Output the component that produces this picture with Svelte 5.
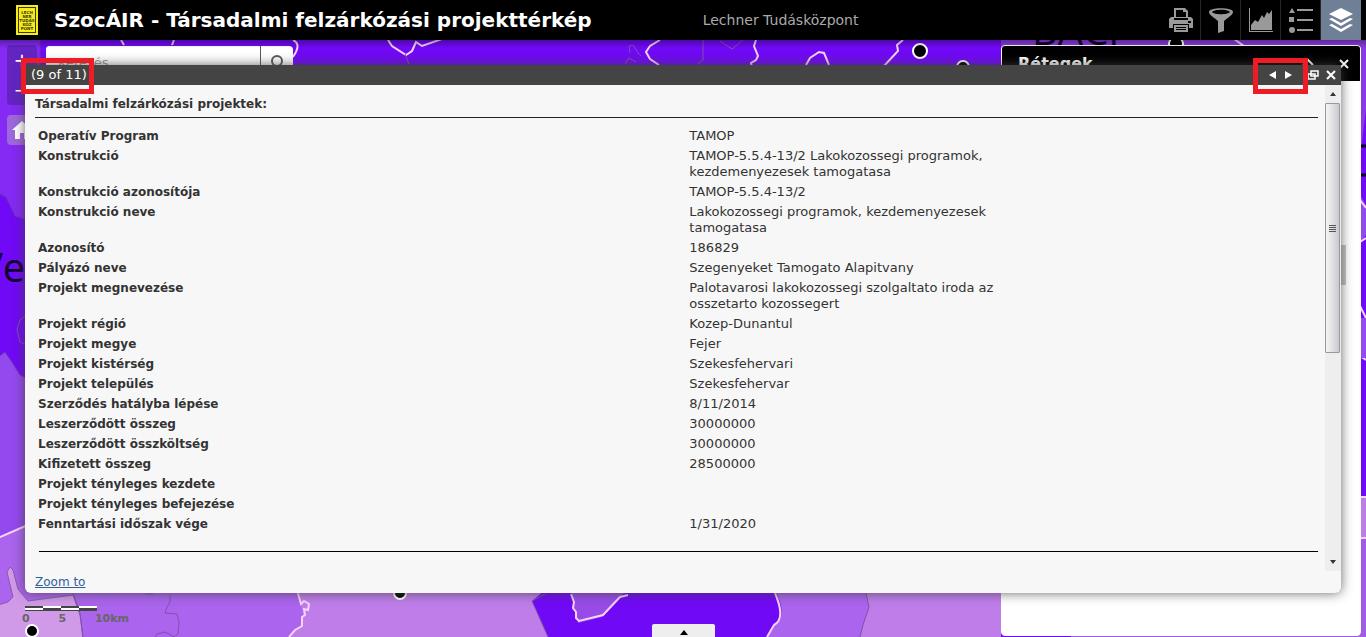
<script>
	const tools = [
		{ id: 'print', label: 'Nyomtatás' },
		{ id: 'filter', label: 'Szűrő' },
		{ id: 'chart', label: 'Diagram' },
		{ id: 'legend', label: 'Jelmagyarázat' },
		{ id: 'layers', label: 'Rétegek' },
	];

	let active = $state('layers');

	const fields = [
		['Operatív Program', 'TAMOP'],
		['Konstrukció', 'TAMOP-5.5.4-13/2 Lakokozossegi programok, kezdemenyezesek tamogatasa'],
		['Konstrukció azonosítója', 'TAMOP-5.5.4-13/2'],
		['Konstrukció neve', 'Lakokozossegi programok, kezdemenyezesek tamogatasa'],
		['Azonosító', '186829'],
		['Pályázó neve', 'Szegenyeket Tamogato Alapitvany'],
		['Projekt megnevezése', 'Palotavarosi lakokozossegi szolgaltato iroda az osszetarto kozossegert'],
		['Projekt régió', 'Kozep-Dunantul'],
		['Projekt megye', 'Fejer'],
		['Projekt kistérség', 'Szekesfehervari'],
		['Projekt település', 'Szekesfehervar'],
		['Szerződés hatályba lépése', '8/11/2014'],
		['Leszerződött összeg', '30000000'],
		['Leszerződött összköltség', '30000000'],
		['Kifizetett összeg', '28500000'],
		['Projekt tényleges kezdete', ''],
		['Projekt tényleges befejezése', ''],
		['Fenntartási időszak vége', '1/31/2020'],
	];

	const logoRows = ['LECH', 'NER', 'TUDÁS', 'KÖZ', 'PONT'];
</script>

<div class="page">
	<header class="topbar">
		<svg class="logo" viewBox="0 0 22 30" aria-hidden="true">
			<rect width="22" height="30" fill="#f4ea1c" />
			<rect x="2.5" y="2.5" width="17" height="25" fill="none" stroke="#3c3a08" />
			{#each logoRows as row, i}
				<text x="11" y={9 + i * 4} text-anchor="middle">{row}</text>
			{/each}
		</svg>
		<h1>SzocÁIR - Társadalmi felzárkózási projekttérkép</h1>
		<span class="subtitle">Lechner Tudásközpont</span>
		<nav class="tools">
			{#each tools as tool}
				<button class="tool" class:active={active === tool.id} aria-label={tool.label} onclick={() => (active = tool.id)}>
					<svg viewBox="0 0 26 26" fill="currentColor" aria-hidden="true">
						{#if tool.id === 'print'}
							<path d="M6 1h11l3 3v7H6zM8 3v7h10V5h-3V3z" fill-rule="evenodd" />
							<path d="M3 10h3v3h14v-3h3l2 2v9h-4v-4H5v4H1v-9zM20 14v2h3v-2z" fill-rule="evenodd" />
							<path d="M6 18h14v7H6zM8 20v1h10v-1zM8 22v1h10v-1z" fill-rule="evenodd" />
						{:else if tool.id === 'filter'}
							<path d="M1 5c0-5 24-5 24 0 0 3-6 6-9 9v10l-6 2V14C7 11 1 8 1 5zM4 5c2 3 16 3 18 0-2-3-16-3-18 0z" fill-rule="evenodd" />
						{:else if tool.id === 'chart'}
							<path d="M1 1h1v23h23v1H1z" />
							<path d="M3 23v-5l4-5 3 2 4-7 2 3 3-6 2 2 3-4v20z" />
						{:else if tool.id === 'legend'}
							<path d="M4 1l3 5H1zM1 10h5v5H1zM9 2h16v2H9zM9 12h16v2H9zM9 22h16v2H9z" />
							<circle cx="4" cy="23" r="3" />
						{:else}
							<path d="M13 1l12 6-12 6L1 7z" />
							<path d="M1 12l3-1 9 5 9-5 3 1-12 7zM1 18l3-1 9 5 9-5 3 1-12 7z" />
						{/if}
					</svg>
				</button>
			{/each}
		</nav>
	</header>

	<main class="map">
		<svg class="canvas" viewBox="0 40 1366 597" preserveAspectRatio="xMinYMin slice" aria-hidden="true">
			<rect y="40" width="1366" height="597" fill="#7009f5" />
			<path d="M-2 30H40V200L25 219 15 216 6 197-2 193z" fill="#8529f4" stroke="#6d35ad" />
			<path d="M-2 357L5 352 12 362 20 375 30 380V540L-2 540z" fill="#9449ee" stroke="#6d35ad" />
			<path d="M25 316l-5 4-3 10 3 12 5 2" fill="none" stroke="#7c52ad" />
			<path d="M0 537L30 524 90 590V637H0z" fill="#aa64ed" />
			<path d="M-2 605l10-3 5-5-6-25 3-5 3 3 5 19 10 12 45-6 7 20 5 39H-2z" fill="#d19ae8" stroke="#8b5aa9" />
			<path d="M73 590H310L302 607 308 604 308 612 303 615 303 624 290 637H83L81 615z" fill="#aa64ed" />
			<path d="M297 590H545L532 601 548 637H289L303 623 303 612z" fill="#be7de9" />
			<path d="M297 590l4 14 3-3 5 3-1 6-4-1 1 6-3 2v9l-7 4-6 7M0 537l30-13" class="border" />
			<path d="M145 594h8M170 595v7l-3 5-2 6 12 1 2 8-1 12-4 3-5-3-4-2-8 2-2 4M73 593l7 20 3 24" class="district" />
			<path d="M532 601l13-7M532 601l16 36" class="district" />
			<path d="M571 590l2 13 2 9 3 11 24-6 20-22 5-5z" fill="#984be8" />
			<path d="M571 594l3 8-1 6 3 4v6l3 3 24-6 17-18 8-2" class="border" />
			<path d="M775 590q14 27-2 37l-8 14H1001V590z" fill="#aa64ed" />
			<path d="M866 593l3 14-6 18-3 12H1001V590z" fill="#be7de9" />
			<path d="M775 593q11 26-1 32l-7 12" class="border" />
			<path d="M866 593l3 14-6 18-3 12" class="district" />
			<path d="M121 40l3 5M172 45l2-5M293 40q9 4 0 17M388 40l4 6 14 9 6-4 4-9 6 4 20-7M660 40l-10 6-4 6 4 7 9 6M756 40l-2 6 4 10-2 4-5 3 1 4M806 65l4-7 9-6 5 1 5 12M884 66l14-15-1-6 6-5" class="border" />
			<path d="M405 54l4 10M630 53l-1-7 4-1 5 8 3 3M625 64l4-6 7 4M703 40v20l-5 4M720 41l12 8 11-9" class="district" />
			<path d="M1001 40H1366V110L1361 150V180H1001V50z" fill="#8a3ae0" />
			<path d="M1234 39l10 7" class="border" />
			<path d="M1358 146h10M1358 175h10" stroke="#090019" stroke-width="3" />
			<path d="M1360 195l6 10v30l-6 8z" fill="#904be8" />
			<path d="M1360 200l6 8M1360 242l6-4M1360 306l6 12M1360 356l6 4" class="border" />
			<path d="M1361 318h5v40h-5z" fill="#944ceb" />
			<path d="M1361 497h5v41h-5z" fill="#bd7ee8" />
			<path d="M1361 538h5v99h-295v-3h290z" fill="#a05ce5" />
			<path d="M1360 497h6M1360 538h6" class="border" />
			<g class="pins">
				<circle cx="920" cy="51" r="7" />
				<circle cx="963" cy="67" r="6" />
				<circle cx="1176" cy="44" r="7" />
				<circle cx="400" cy="593" r="6" />
				<circle cx="32" cy="631" r="6" />
			</g>
			<text x="-21" y="282" class="place">Ve</text>
			<text x="1032" y="45" class="place">BÁCI</text>
		</svg>

		<div class="zoom">
			<button aria-label="Nagyítás">+</button>
			<button aria-label="Kicsinyítés">−</button>
		</div>
		<button class="home" aria-label="Kezdőlap">
			<svg viewBox="0 0 20 20" aria-hidden="true"><path d="M10 1l10 9h-3v9h-5v-6H8v6H3v-9H0z" fill="#fff" /></svg>
		</button>

		<form class="search">
			<input type="text" placeholder="Keresés" aria-label="Keresés" />
			<button type="button" aria-label="Keresés indítása">
				<svg viewBox="0 0 16 16" aria-hidden="true"><circle cx="8" cy="7" r="5" /><path d="M11 11l4 4" /></svg>
			</button>
		</form>

		<aside class="layers">
			<div class="layers-head">
				<h2>Rétegek</h2>
				<button aria-label="Összecsukás"><svg viewBox="0 0 12 12" aria-hidden="true"><path d="M1 7l5-5 5 5" /></svg></button>
				<button aria-label="Bezárás"><svg viewBox="0 0 12 12" aria-hidden="true"><path d="M2 2l8 8M10 2l-8 8" /></svg></button>
			</div>
			<div class="layers-thumb"></div>
		</aside>

		<div class="scale">
			<div class="scale-bar"><i></i><i></i><i></i><i></i></div>
			<div class="scale-text"><span>0</span><span>5</span><span>10km</span></div>
		</div>

		<button class="drawer" aria-label="Attribútumtábla megnyitása">
			<svg viewBox="0 0 8 5" aria-hidden="true"><path d="M0 5l4-5 4 5z" /></svg>
		</button>

		<section class="popup">
			<div class="popup-head">
				<span class="count">(9 of 11)</span>
				<div class="pager">
					<button aria-label="Előző"><svg viewBox="0 0 8 10" aria-hidden="true"><path d="M8 1v8L1 5z" fill="#fff" /></svg></button>
					<button aria-label="Következő"><svg viewBox="0 0 8 10" aria-hidden="true"><path d="M0 1v8l7-4z" fill="#fff" /></svg></button>
				</div>
				<button class="restore" aria-label="Teljes méret">
					<svg viewBox="0 0 12 10" aria-hidden="true"><path d="M4 1h7v5H4zM1 4h7v5H1z" /></svg>
				</button>
				<button class="close" aria-label="Bezárás">
					<svg viewBox="0 0 12 12" aria-hidden="true"><path d="M2 2l8 8M10 2l-8 8" /></svg>
				</button>
			</div>
			<div class="popup-body">
				<div class="content">
					<h3>Társadalmi felzárkózási projektek:</h3>
					<table>
						<tbody>
							{#each fields as [name, value]}
								<tr>
									<th scope="row">{name}</th>
									<td>{value}</td>
								</tr>
							{/each}
						</tbody>
					</table>
					<hr />
				</div>
				<div class="scrollbar" aria-hidden="true">
					<svg class="arrow" viewBox="0 0 16 18"><path d="M5 11l3-4 3 4z" /></svg>
					<div class="thumb"><i></i><i></i><i></i><i></i></div>
					<svg class="arrow" viewBox="0 0 16 18"><path d="M5 7l3 4 3-4z" /></svg>
				</div>
			</div>
			<div class="popup-foot">
				<a href="#zoom">Zoom to</a>
			</div>
			<div class="mark mark-count"></div>
			<div class="mark mark-pager"></div>
		</section>
	</main>
</div>

<style>
	:global(body) {
		margin: 0;
		overflow: hidden;
		font-family: Verdana, 'DejaVu Sans', sans-serif;
		font-size: 13px;
		color: #333;
	}

	button {
		margin: 0;
		padding: 0;
		border: 0;
		background: none;
		color: inherit;
		font: inherit;
		cursor: pointer;
	}

	svg {
		display: block;
	}

	.page {
		display: flex;
		flex-direction: column;
		height: 100vh;
	}

	.topbar {
		display: flex;
		align-items: center;
		flex: none;
		height: 40px;
		padding: 0 5px 0 16px;
		background: #000;
	}

	.logo {
		width: 22px;
		height: 30px;
		margin-right: 16px;
	}

	.logo text {
		font-size: 4px;
		font-weight: bold;
		fill: #3c3a08;
	}

	h1 {
		margin: 0;
		font-size: 20px;
		line-height: 24px;
		color: #fff;
		white-space: nowrap;
	}

	.subtitle {
		margin-left: 111px;
		font-size: 14px;
		color: #aaa;
		white-space: nowrap;
	}

	.tools {
		display: flex;
		margin-left: auto;
	}

	.tool {
		display: flex;
		align-items: center;
		justify-content: center;
		box-sizing: border-box;
		width: 40px;
		height: 40px;
		border-right: 1px solid #252525;
		color: #999;
	}

	.tool:last-child {
		border-right: 0;
	}

	.tool svg {
		width: 26px;
		height: 26px;
	}

	.tool.active {
		background: #6e7f96;
		color: #fff;
	}

	.map {
		position: relative;
		flex: 1;
		overflow: hidden;
		background: #7009f5;
	}

	.map::before {
		content: '';
		position: absolute;
		inset: 0 0 auto;
		z-index: 1;
		height: 8px;
		background: linear-gradient(rgba(0, 0, 0, 0.3), transparent);
	}

	.canvas {
		position: absolute;
		inset: 0;
		width: 100%;
		height: 100%;
	}

	.border {
		fill: none;
		stroke: #f7d3f7;
		stroke-width: 2;
	}

	.district {
		fill: none;
		stroke: #8052a8;
	}

	.pins circle {
		fill: #000;
		stroke: #fff;
		stroke-width: 2;
	}

	.place {
		font-family: 'Open Sans', sans-serif;
		font-size: 40px;
		fill: #10002a;
	}

	.zoom {
		position: absolute;
		top: 5px;
		left: 7px;
		display: flex;
		flex-direction: column;
		width: 30px;
		border-radius: 4px;
		background: rgba(76, 34, 160, 0.6);
		color: #fff;
	}

	.zoom button {
		height: 30px;
		font-size: 20px;
		line-height: 26px;
	}

	.home {
		position: absolute;
		top: 75px;
		left: 7px;
		display: flex;
		align-items: center;
		justify-content: center;
		width: 30px;
		height: 30px;
		border-radius: 4px;
		background: rgba(170, 130, 210, 0.7);
	}

	.home svg {
		width: 20px;
		height: 20px;
	}

	.search {
		position: absolute;
		top: 6px;
		left: 46px;
		display: flex;
		width: 247px;
		height: 32px;
		border-radius: 4px;
		background: #fff;
		overflow: hidden;
	}

	.search input {
		flex: 1;
		min-width: 0;
		padding: 0 12px;
		border: 0;
		border-right: 1px solid #57585a;
		font: inherit;
	}

	.search input::placeholder {
		color: #999;
	}

	.search button {
		display: flex;
		align-items: center;
		justify-content: center;
		width: 32px;
	}

	.search svg {
		width: 16px;
		height: 16px;
		fill: none;
		stroke: #57585a;
		stroke-width: 2;
	}

	.layers {
		position: absolute;
		top: 5px;
		right: 5px;
		bottom: 1px;
		display: flex;
		flex-direction: column;
		box-sizing: border-box;
		width: 360px;
		border: 1px solid #fff;
		border-radius: 4px;
		background: #fff;
		overflow: hidden;
	}

	.layers-head {
		display: flex;
		align-items: center;
		gap: 24px;
		height: 35px;
		padding: 0 10px 0 16px;
		background: #000;
		color: #fff;
	}

	.layers-head h2 {
		flex: 1;
		margin: 0;
		font-size: 16px;
	}

	.layers-head svg,
	.close svg {
		width: 12px;
		height: 12px;
		fill: none;
		stroke: #fff;
		stroke-width: 2;
	}

	.layers-thumb {
		width: 5px;
		height: 40px;
		margin: 164px 14px 0 auto;
		background: #c4c4c4;
	}

	.scale {
		position: absolute;
		bottom: 12px;
		left: 22px;
	}

	.scale-bar {
		display: flex;
		width: 72px;
		margin-left: 3px;
	}

	.scale-bar i {
		flex: 1;
		height: 2px;
		border-top: 2px solid #444;
		border-bottom: 1px solid #444;
		background: #fff;
	}

	.scale-bar i:nth-child(even) {
		border-top-color: #fff;
		background: #444;
	}

	.scale-text {
		display: flex;
		justify-content: space-between;
		width: 107px;
		margin-top: 1px;
		font-size: 11px;
		font-weight: bold;
		line-height: 13px;
		color: #666;
	}

	.drawer {
		position: absolute;
		bottom: 0;
		left: 50%;
		display: flex;
		justify-content: center;
		width: 63px;
		height: 13px;
		margin-left: -31px;
		padding-top: 6px;
		box-sizing: border-box;
		border-radius: 2px 2px 0 0;
		background: #eee;
	}

	.drawer svg {
		width: 8px;
		height: 5px;
	}

	.popup {
		position: absolute;
		top: 25px;
		right: 25px;
		left: 25px;
		z-index: 2;
		border-radius: 0 0 6px 6px;
		background: #f7f7f7;
		box-shadow: 0 0 12px rgba(64, 64, 64, 0.8);
		line-height: 16px;
	}

	.popup-head {
		display: flex;
		align-items: center;
		height: 20px;
		padding: 0 4px 0 6px;
		background: #444;
		color: #fff;
	}

	.count {
		flex: 1;
	}

	.pager {
		display: flex;
		gap: 9px;
		margin-right: 14px;
	}

	.pager svg {
		width: 8px;
		height: 10px;
	}

	.restore {
		margin-right: 6px;
	}

	.restore svg {
		width: 12px;
		height: 10px;
		fill: none;
		stroke: #fff;
		stroke-width: 1.5;
	}

	.popup-body {
		display: flex;
	}

	.content {
		flex: 1;
		padding: 11px 7px 19px 10px;
	}

	h3 {
		margin: 0 0 7px;
		padding-bottom: 5px;
		border-bottom: 1px solid #222;
		font-size: 12px;
		line-height: 16px;
	}

	table {
		width: 100%;
		border-collapse: collapse;
		table-layout: fixed;
	}

	th {
		box-sizing: border-box;
		width: 51%;
		padding: 3px 3px 1px;
		font-size: 12px;
		text-align: left;
		vertical-align: top;
	}

	td {
		padding: 3px 320px 1px 0;
		vertical-align: top;
	}

	hr {
		margin: 18px 0 0 4px;
		border: 0;
		border-top: 1px solid #000;
	}

	.scrollbar {
		display: flex;
		flex-direction: column;
		width: 16px;
		background: #eee;
	}

	.arrow {
		width: 16px;
		height: 18px;
		fill: #333;
	}

	.thumb {
		display: flex;
		flex-direction: column;
		align-items: center;
		justify-content: center;
		gap: 1px;
		box-sizing: border-box;
		width: 15px;
		height: 250px;
		margin-bottom: auto;
		border: 1px solid #999;
		border-radius: 1px;
		background: linear-gradient(90deg, #f5f5f5, #e3e3e6 45%, #c8c8cf);
	}

	.thumb i {
		width: 7px;
		height: 1px;
		background: #555;
	}

	.popup-foot {
		padding: 3px 10px;
	}

	.popup-foot a {
		color: #2f609b;
		font-size: 12px;
	}

	.mark {
		position: absolute;
		top: -7px;
		box-sizing: border-box;
		height: 36px;
		border: 5px solid #ee1c25;
		pointer-events: none;
	}

	.mark-count {
		left: -4px;
		width: 73px;
	}

	.mark-pager {
		right: 33px;
		width: 55px;
	}
</style>
